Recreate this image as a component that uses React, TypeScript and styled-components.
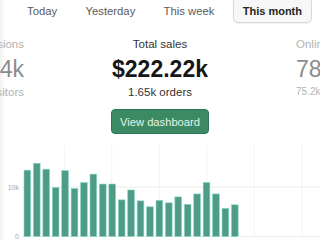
import React from "react";
import styled, { createGlobalStyle } from "styled-components";

const Global = createGlobalStyle`
  html, body { margin: 0; padding: 0; background: #ffffff; }
  body { font-family: "Liberation Sans", Arial, sans-serif; }
`;

const Screen = styled.div`
  width: 320px;
  height: 240px;
  overflow: hidden;
  background: #ffffff;
  box-shadow: inset 5px 0 5px -3px rgba(0, 0, 0, 0.07);
  display: flex;
  flex-direction: column;
`;

const Tabs = styled.div`
  display: flex;
  gap: 8.3px;
  margin-top: -3px;
  padding-left: 17px;
`;

const Tab = styled.button<{ $active?: boolean }>`
  height: 26px;
  padding: 1px 9px 0;
  border: 1px solid ${(p) => (p.$active ? "#d8d8d8" : "transparent")};
  border-radius: 5px;
  background: ${(p) => (p.$active ? "#f7f7f7" : "transparent")};
  box-shadow: ${(p) => (p.$active ? "0 1px 1px rgba(0,0,0,0.06)" : "none")};
  font-family: inherit;
  font-size: ${(p) => (p.$active ? "11px" : "11.3px")};
  font-weight: ${(p) => (p.$active ? 700 : 400)};
  color: ${(p) => (p.$active ? "#262626" : "#5a5a5a")};
  white-space: nowrap;
`;

const Stats = styled.div`
  display: grid;
  grid-template-columns: 24px 272px 24px;
  margin-top: 14px;
`;

const Stat = styled.div<{ $side?: "left" | "right" }>`
  display: flex;
  flex-direction: column;
  align-items: ${(p) =>
    p.$side === "left" ? "flex-end" : p.$side === "right" ? "flex-start" : "center"};
  white-space: nowrap;
  color: ${(p) => (p.$side ? "#b2b2b2" : "#333333")};
`;

const Label = styled.div`
  font-size: 11.5px;
  line-height: 14px;
`;

const Value = styled.div<{ $muted?: boolean }>`
  margin-top: 4px;
  font-size: 23px;
  line-height: 28px;
  font-weight: ${(p) => (p.$muted ? 400 : 700)};
  color: ${(p) => (p.$muted ? "#8c8c8c" : "#161616")};
`;

const Sub = styled.div<{ $small?: boolean }>`
  margin-top: 2px;
  font-size: ${(p) => (p.$small ? "10px" : "11.5px")};
  line-height: 14px;
`;

const Button = styled.button`
  align-self: center;
  margin-top: 10px;
  width: 98px;
  height: 25px;
  border: 1px solid #2f7754;
  border-radius: 4px;
  background: #3b8a63;
  color: #e3f3e9;
  font-family: inherit;
  font-size: 11.2px;
  padding: 0;
  white-space: nowrap;
`;

const Chart = styled.svg`
  display: block;
  margin-top: 11px;
  flex-shrink: 0;
`;

const data = [
  13.4, 14.8, 13.6, 9.9, 13.3, 9.7, 10.9, 12.6, 10.6, 10.6, 7.4, 9.4, 7.2, 6.0,
  7.3, 6.8, 8.0, 6.5, 8.6, 10.9, 8.6, 5.7, 6.4,
];

const TOP = 145;
const BASE = 236.5 - TOP;
const PER_K = 4.95;
const verticals = [64.3, 111.8, 159.3, 206.8, 254.3, 301.8];

function SalesChart() {
  return (
    <Chart width={320} height={95} viewBox="0 0 320 95">
      {verticals.map((x) => (
        <line key={x} x1={x} x2={x} y1={0} y2={BASE} stroke="#f3f3f3" strokeWidth={1} />
      ))}
      <line x1={22} x2={320} y1={BASE - 10 * PER_K} y2={BASE - 10 * PER_K} stroke="#ececec" strokeWidth={1} />
      <line x1={22} x2={320} y1={BASE} y2={BASE} stroke="#eeeeee" strokeWidth={1} />
      <text x={19} y={BASE - 10 * PER_K + 2.5} fontSize={7} fill="#a8a8a8" textAnchor="end" fontFamily="Liberation Sans, Arial, sans-serif">
        10k
      </text>
      <text x={19} y={BASE + 2.5} fontSize={7} fill="#a8a8a8" textAnchor="end" fontFamily="Liberation Sans, Arial, sans-serif">
        0
      </text>
      {data.map((v, i) => {
        const h = v * PER_K;
        return (
          <rect
            key={i}
            x={24 + i * 9.43}
            y={BASE - h}
            width={6.7}
            height={h}
            fill="#4e9c87"
            stroke="#86d8c6"
            strokeWidth={0.6}
          />
        );
      })}
    </Chart>
  );
}

export default function App() {
  return (
    <>
      <Global />
      <Screen>
        <Tabs>
          <Tab>Today</Tab>
          <Tab>Yesterday</Tab>
          <Tab>This week</Tab>
          <Tab $active>This month</Tab>
        </Tabs>
        <Stats>
          <Stat $side="left">
            <Label>Sessions</Label>
            <Value $muted>12.4k</Value>
            <Sub>9.81k visitors</Sub>
          </Stat>
          <Stat>
            <Label>Total sales</Label>
            <Value>$222.22k</Value>
            <Sub>1.65k orders</Sub>
            <Button>View dashboard</Button>
          </Stat>
          <Stat $side="right">
            <Label>Online store</Label>
            <Value $muted>78.4k</Value>
            <Sub $small>75.2k visits</Sub>
          </Stat>
        </Stats>
        <SalesChart />
      </Screen>
    </>
  );
}
